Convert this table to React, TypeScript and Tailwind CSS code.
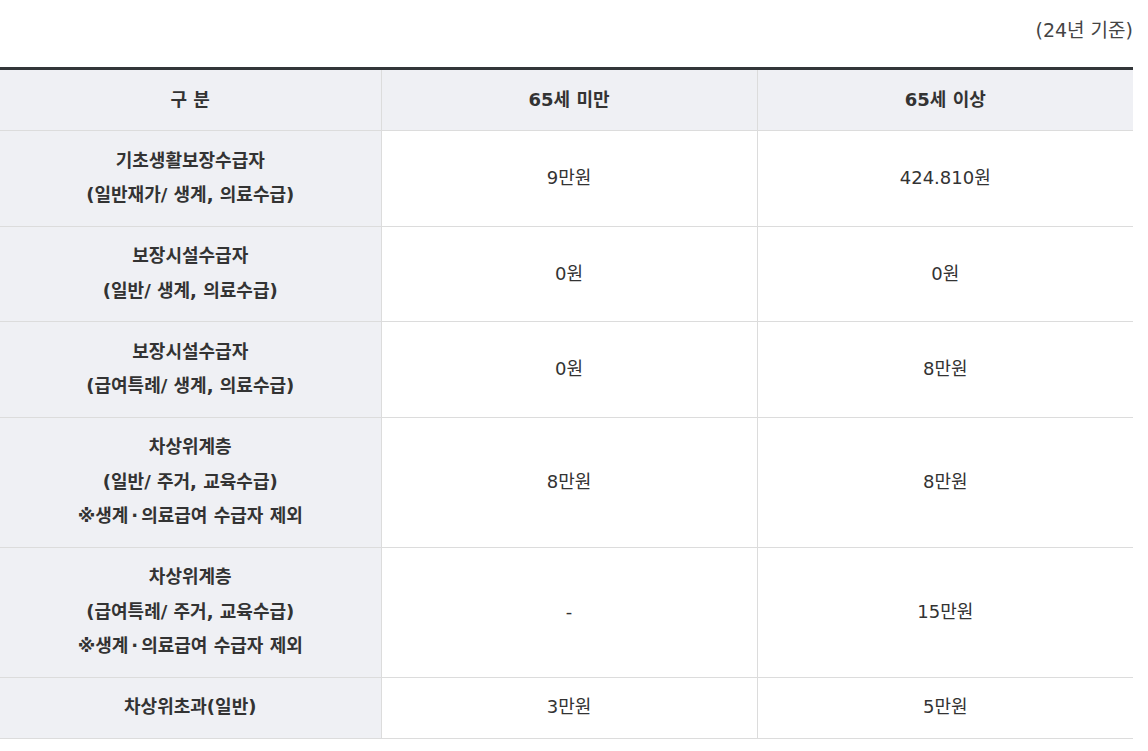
import React from "react";

const rows: { label: React.ReactNode[]; a: string; b: string }[] = [
  { label: ["기초생활보장수급자", "(일반재가/ 생계, 의료수급)"], a: "9만원", b: "424.810원" },
  { label: ["보장시설수급자", "(일반/ 생계, 의료수급)"], a: "0원", b: "0원" },
  { label: ["보장시설수급자", "(급여특례/ 생계, 의료수급)"], a: "0원", b: "8만원" },
  {
    label: [
      "차상위계층",
      "(일반/ 주거, 교육수급)",
      <>
        ※생계<span className="mx-[3px]">·</span>의료급여 수급자 제외
      </>,
    ],
    a: "8만원",
    b: "8만원",
  },
  {
    label: [
      "차상위계층",
      "(급여특례/ 주거, 교육수급)",
      <>
        ※생계<span className="mx-[3px]">·</span>의료급여 수급자 제외
      </>,
    ],
    a: "-",
    b: "15만원",
  },
  { label: ["차상위초과(일반)"], a: "3만원", b: "5만원" },
];

const cell = "border-b border-[#dcdcdc] py-[12.75px] text-[18px] leading-[34.5px] text-center align-middle";

export default function App() {
  return (
    <div
      className="w-[1148px] h-[751px] bg-white text-[#333]"
      style={{ fontFamily: '"DejaVu Sans", "Noto Sans CJK KR", sans-serif' }}
    >
      <div className="w-[1133px]">
        <div className="h-[67px] pt-[16px] text-right text-[19px] leading-[28px] text-[#444]">(24년 기준)</div>
        <table className="w-[1133px] border-collapse table-fixed border-t-[3px] border-[#333639]">
          <colgroup>
            <col className="w-[381px]" />
            <col className="w-[376px]" />
            <col className="w-[376px]" />
          </colgroup>
          <thead>
            <tr className="bg-[#eff0f4]">
              <th className={`${cell} font-bold`}>구 분</th>
              <th className={`${cell} border-l font-bold`}>65세 미만</th>
              <th className={`${cell} border-l font-bold`}>65세 이상</th>
            </tr>
          </thead>
          <tbody>
            {rows.map((r, i) => (
              <tr key={i}>
                <td className={`${cell} bg-[#eff0f4] font-bold`}>
                  {r.label.map((l, j) => (
                    <div key={j}>{l}</div>
                  ))}
                </td>
                <td className={`${cell} border-l`}>{r.a}</td>
                <td className={`${cell} border-l`}>{r.b}</td>
              </tr>
            ))}
          </tbody>
        </table>
      </div>
    </div>
  );
}
